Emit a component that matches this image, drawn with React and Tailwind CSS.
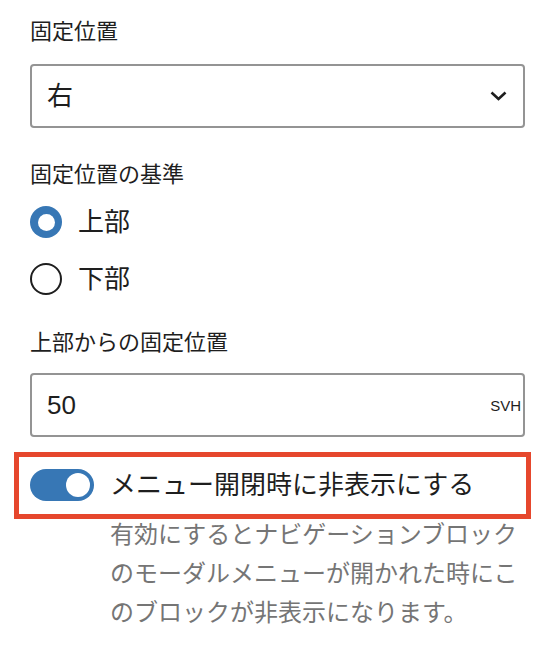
import React from "react";

const font = { fontFamily: '"Liberation Sans", "Noto Sans CJK JP", sans-serif' };

export default function App() {
  return (
    <div
      className="w-[552px] h-[648px] bg-white overflow-hidden pl-[30px] pr-[27px] pt-[16px] text-[#1e1e1e] font-['Liberation_Sans','Noto_Sans_CJK_JP',sans-serif]"
    >
      {/* 固定位置 */}
      <div className="text-[22px] leading-[32px]">固定位置</div>
      <div className="mt-[16px] h-[64px] rounded-[4px] border-2 border-[#949494] flex items-center justify-between pl-[15px] pr-[16px]">
        <span className="text-[26px] leading-none">右</span>
        <svg width="17" height="10" viewBox="0 0 17 10" fill="none">
          <path d="M1.5 1.5 L8.5 8 L15.5 1.5" stroke="#1e1e1e" strokeWidth="2.6" />
        </svg>
      </div>

      {/* 固定位置の基準 */}
      <div className="mt-[31px] text-[22px] leading-[32px]">固定位置の基準</div>
      <div className="mt-[15px] flex flex-col gap-[25px]">
        <div className="flex items-center h-[32px] gap-[16px]">
          <div className="w-[32px] h-[32px] rounded-full bg-[#3777b5] flex items-center justify-center">
            <div className="w-[17px] h-[17px] rounded-full bg-white" />
          </div>
          <span className="text-[26px] leading-none">上部</span>
        </div>
        <div className="flex items-center h-[32px] gap-[16px]">
          <div className="w-[32px] h-[32px] rounded-full border-2 border-[#1e1e1e]" />
          <span className="text-[26px] leading-none">下部</span>
        </div>
      </div>

      {/* 上部からの固定位置 */}
      <div className="mt-[32px] text-[22px] leading-[32px]">上部からの固定位置</div>
      <div className="mt-[14px] h-[64px] rounded-[4px] border-2 border-[#949494] flex items-center justify-between pl-[15px] pr-[2px]">
        <span className="text-[26px] leading-none">50</span>
        <span className="text-[15px] leading-none uppercase">svh</span>
      </div>

      {/* Toggle */}
      <div className="relative mt-[32px] flex items-center h-[32px] gap-[16px]">
        <div className="w-[64px] h-[32px] rounded-full bg-[#3777b5] flex items-center justify-end pr-[4px]">
          <div className="w-[24px] h-[24px] rounded-full bg-white" />
        </div>
        <span className="text-[26px] leading-none">メニュー開閉時に非表示にする</span>
        <div className="absolute left-[-16px] right-[-6px] top-[-17px] bottom-[-18px] border-[5px] border-[#e6472d] pointer-events-none" />
      </div>
      <p className="mt-[14px] ml-[80px] text-[24px] leading-[39px] text-[#757575]">
        有効にするとナビゲーションブロックのモーダルメニューが開かれた時にこのブロックが非表示になります。
      </p>
    </div>
  );
}
